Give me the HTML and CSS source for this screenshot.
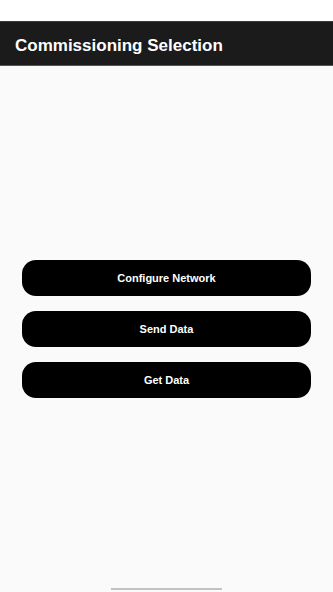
FILE: index.html
```html
<!DOCTYPE html>
<html lang="en">
<head>
    <meta charset="UTF-8">
    <meta name="viewport" content="width=device-width, initial-scale=1.0">
    <title>Commissioning Selection</title>
    <link rel="stylesheet" href="styles.css">
</head>
<body>

<div id="app">
    <div class="status-bar"></div>
    <div class="toolbar">
        <h1>Commissioning Selection</h1>
    </div>

    <div class="content">
        <button type="button" class="action-btn">Configure Network</button>
        <button type="button" class="action-btn">Send Data</button>
        <button type="button" class="action-btn">Get Data</button>
    </div>

    <div class="nav-bar">
        <div class="nav-handle"></div>
    </div>
</div>

</body>
</html>
```

FILE: styles.css
```css
body {
    font-family: 'Liberation Sans', Arial, sans-serif;
    background-color: #fafafa;
    margin: 0;
    padding: 0;
}

#app {
    display: flex;
    flex-direction: column;
    height: 592px;
}

.status-bar {
    height: 21px;
    background-color: #fff;
}

.toolbar {
    height: 45px;
    background-color: #1b1b1b;
    display: flex;
    align-items: center;
    padding: 5px 15px 0;
    box-sizing: border-box;
    border-top: 1px solid #3a3a3a;
    border-bottom: 1px solid #555;
}

h1 {
    margin: 0;
    color: #fff;
    font-size: 17px;
    font-weight: 700;
}

.content {
    flex: 1;
    display: flex;
    flex-direction: column;
    gap: 15px;
    padding: 194px 22px 0;
}

.action-btn {
    height: 36px;
    background-color: #000;
    color: #fff;
    border: none;
    border-radius: 14px;
    font-family: 'Liberation Sans', Arial, sans-serif;
    font-size: 11px;
    font-weight: 700;
    cursor: pointer;
}

.nav-bar {
    height: 14px;
    display: flex;
    justify-content: center;
    align-items: flex-end;
    padding-bottom: 2px;
}

.nav-handle {
    width: 111px;
    height: 2px;
    background-color: #c2c2c2;
}
```
